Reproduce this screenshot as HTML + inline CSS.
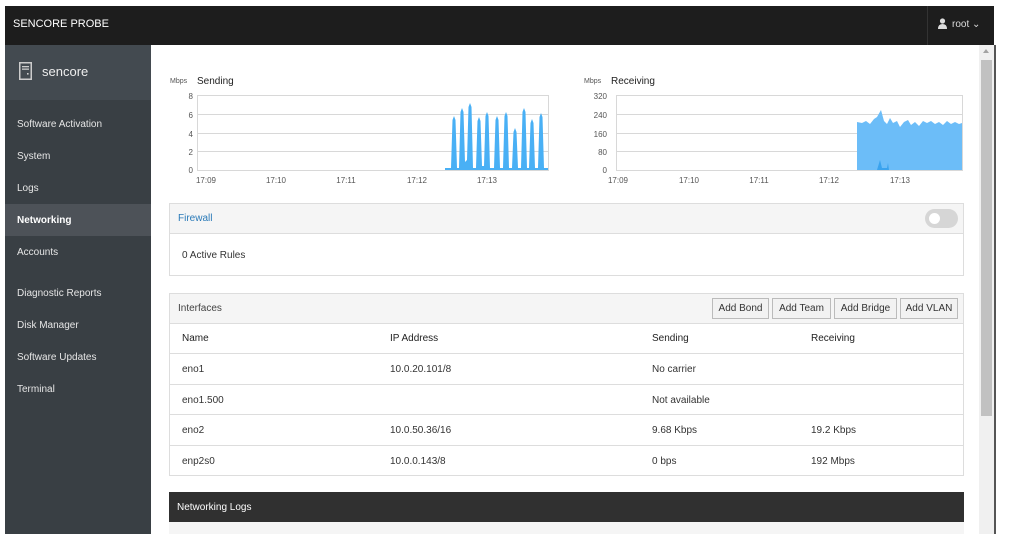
<!DOCTYPE html>
<html><head><meta charset="utf-8"><style>
*{margin:0;padding:0;box-sizing:border-box}
body{width:1009px;height:547px;background:#fff;font-family:"Liberation Sans",sans-serif;font-size:10px;color:#333;position:relative;overflow:hidden}
.a{position:absolute}
#top{left:5px;top:6px;width:989px;height:39px;background:#1d1d1d}
#side{left:5px;top:45px;width:146px;height:489px;background:#393f44}
.nav{position:absolute;left:12px;color:#e6e6e6;font-size:10px}
#main{left:152px;top:45px;width:827px;height:489px;background:#fff}
.t{position:absolute;font-size:10px;color:#333}
.row{position:absolute;left:169px;width:794px;height:31px;border-top:1px solid #ddd}
.btn{position:absolute;top:298px;height:21px;border:1px solid #bbb;background:#f2f2f2;font-size:10px;color:#333;text-align:center;line-height:19px}
</style></head><body>
<div id="top" class="a">
 <div class="a" style="left:8px;top:12px;color:#fff;font-size:11px">SENCORE PROBE</div>
 <div class="a" style="left:922px;top:0;width:1px;height:39px;background:#333"></div>
 <svg class="a" style="left:933px;top:12px" width="9" height="11" viewBox="0 0 9 11"><circle cx="4.5" cy="3" r="2.6" fill="#ddd"/><path d="M0 11 Q0 6 4.5 6 Q9 6 9 11Z" fill="#ddd"/></svg>
 <div class="a" style="left:947px;top:13px;color:#ddd;font-size:10px">root &#8964;</div>
</div>
<div id="side" class="a">
 <div class="a" style="left:0;top:0;width:146px;height:55px;background:#434a50"></div>
 <svg class="a" style="left:14px;top:17px" width="13" height="18" viewBox="0 0 13 18"><rect x="0.75" y="0.75" width="11.5" height="16.5" fill="none" stroke="#ccc" stroke-width="1.5"/><rect x="3" y="4" width="7" height="1.3" fill="#ccc"/><rect x="3" y="6.5" width="7" height="1.3" fill="#ccc"/><rect x="8" y="11" width="1.6" height="1.6" fill="#ccc"/></svg>
 <div class="a" style="left:37px;top:19px;color:#eee;font-size:13px">sencore</div>
 <div class="a" style="left:0;top:159px;width:146px;height:32px;background:#4d5258"></div>
 <div class="nav" style="top:74px">Software Activation</div>
 <div class="nav" style="top:106px">System</div>
 <div class="nav" style="top:138px">Logs</div>
 <div class="nav" style="top:170px;color:#fff;font-weight:bold">Networking</div>
 <div class="nav" style="top:202px">Accounts</div>
 <div class="nav" style="top:243px">Diagnostic Reports</div>
 <div class="nav" style="top:275px">Disk Manager</div>
 <div class="nav" style="top:307px">Software Updates</div>
 <div class="nav" style="top:339px">Terminal</div>
</div>
<div id="main" class="a"></div>
<div class="a" style="left:979px;top:45px;width:15px;height:489px;background:#f0f0f0"></div>
<div class="a" style="left:981px;top:60px;width:11px;height:356px;background:#c1c1c1"></div>
<div class="a" style="left:983px;top:49px;width:0;height:0;border-left:3px solid transparent;border-right:3px solid transparent;border-bottom:4px solid #a3a3a3"></div>
<div class="a" style="left:994px;top:45px;width:2px;height:489px;background:#555"></div>

<svg class="a" style="left:160px;top:70px" width="820" height="120" viewBox="160 70 820 120">
 <g font-family="Liberation Sans,sans-serif" fill="#555">
  <text x="170" y="83" font-size="7">Mbps</text><text x="197" y="84" font-size="10" fill="#222">Sending</text>
  <text x="584" y="83" font-size="7">Mbps</text><text x="611" y="84" font-size="10" fill="#222">Receiving</text>
  <g font-size="8" text-anchor="end">
   <text x="193" y="99">8</text><text x="193" y="118">6</text><text x="193" y="137">4</text><text x="193" y="155">2</text><text x="193" y="173">0</text>
   <text x="607" y="99">320</text><text x="607" y="118">240</text><text x="607" y="137">160</text><text x="607" y="155">80</text><text x="607" y="173">0</text>
  </g>
  <g font-size="8" text-anchor="middle">
   <text x="206" y="183">17:09</text><text x="276" y="183">17:10</text><text x="346" y="183">17:11</text><text x="417" y="183">17:12</text><text x="487" y="183">17:13</text>
   <text x="618" y="183">17:09</text><text x="689" y="183">17:10</text><text x="759" y="183">17:11</text><text x="829" y="183">17:12</text><text x="900" y="183">17:13</text>
  </g>
 </g>
 <g stroke="#d8d8d8" stroke-width="1" fill="none">
  <rect x="197.5" y="95.5" width="351" height="75"/>
  <path d="M197 114.5H548M197 133.5H548M197 151.5H548"/>
  <rect x="616.5" y="95.5" width="346" height="75"/>
  <path d="M616 114.5H962M616 133.5H962M616 151.5H962"/>
 </g>
 <path fill="#49b0f5" d="M445 170 L445 168 L451 168 L452.5 120 L454 116 L455.5 120 L457 168 L459 168 L460.5 112 L462 108 L463.5 112 L465 162 L467 160 L468.5 107 L470 103 L471.5 107 L473 168 L476 168 L477.5 121 L479 117 L480.5 121 L482 166 L484 166 L485.5 116 L487 112 L488.5 116 L490 168 L494 168 L495.5 120 L497 116 L498.5 120 L500 168 L503 168 L504.5 116 L506 112 L507.5 116 L509 168 L512 168 L513.5 132 L515 128 L516.5 132 L518 168 L521 168 L522.5 112 L524 108 L525.5 112 L527 168 L529 168 L530.5 123 L532 119 L533.5 123 L535 168 L538 168 L539.5 117 L541 113 L542.5 117 L544 168 L548 168 L548 170Z"/>
 <path fill="#6cbdf8" d="M857 170 L857 122 L862 123 L866 121 L870 124 L874 119 L877 117 L881 110 L884 121 L887 124 L890 118 L893 123 L897 121 L900 127 L904 122 L908 120 L911 125 L915 122 L919 126 L923 121 L927 123 L931 121 L935 124 L939 122 L943 125 L947 121 L951 124 L955 122 L959 124 L962 123 L962 170Z"/>
 <path fill="#3aa3ee" d="M877 170 L880 160 L882 168 L887 168 L888 163 L889 170Z"/>
</svg>

<!-- Firewall -->
<div class="a" style="left:169px;top:203px;width:795px;height:73px;border:1px solid #ddd"></div>
<div class="a" style="left:170px;top:204px;width:793px;height:30px;background:#f5f5f5;border-bottom:1px solid #ddd"></div>
<div class="t" style="left:178px;top:213px;color:#2a7ab8">Firewall</div>
<div class="a" style="left:925px;top:209px;width:33px;height:19px;border-radius:10px;background:#d6d6d6"></div>
<div class="a" style="left:929px;top:213px;width:11px;height:11px;border-radius:6px;background:#fff"></div>
<div class="t" style="left:182px;top:250px">0 Active Rules</div>

<!-- Interfaces -->
<div class="a" style="left:169px;top:293px;width:795px;height:183px;border:1px solid #ddd"></div>
<div class="a" style="left:170px;top:294px;width:793px;height:29px;background:#f5f5f5"></div>
<div class="t" style="left:178px;top:303px;color:#444">Interfaces</div>
<div class="btn" style="left:712px;width:57px">Add Bond</div>
<div class="btn" style="left:772px;width:59px">Add Team</div>
<div class="btn" style="left:834px;width:63px">Add Bridge</div>
<div class="btn" style="left:900px;width:58px">Add VLAN</div>
<div class="row" style="top:323px"></div>
<div class="row" style="top:353px"></div>
<div class="row" style="top:384px"></div>
<div class="row" style="top:414px"></div>
<div class="row" style="top:445px"></div>
<div class="t" style="left:182px;top:333px;color:#222">Name</div>
<div class="t" style="left:390px;top:333px;color:#222">IP Address</div>
<div class="t" style="left:652px;top:333px;color:#222">Sending</div>
<div class="t" style="left:811px;top:333px;color:#222">Receiving</div>
<div class="t" style="left:182px;top:364px">eno1</div><div class="t" style="left:390px;top:364px">10.0.20.101/8</div><div class="t" style="left:652px;top:364px">No carrier</div>
<div class="t" style="left:182px;top:395px">eno1.500</div><div class="t" style="left:652px;top:395px">Not available</div>
<div class="t" style="left:182px;top:425px">eno2</div><div class="t" style="left:390px;top:425px">10.0.50.36/16</div><div class="t" style="left:652px;top:425px">9.68 Kbps</div><div class="t" style="left:811px;top:425px">19.2 Kbps</div>
<div class="t" style="left:182px;top:456px">enp2s0</div><div class="t" style="left:390px;top:456px">10.0.0.143/8</div><div class="t" style="left:652px;top:456px">0 bps</div><div class="t" style="left:811px;top:456px">192 Mbps</div>

<!-- Logs -->
<div class="a" style="left:169px;top:492px;width:795px;height:30px;background:#303030"></div>
<div class="t" style="left:177px;top:502px;color:#fff">Networking Logs</div>
<div class="a" style="left:169px;top:522px;width:795px;height:12px;background:#f5f5f5"></div>
</body></html>
